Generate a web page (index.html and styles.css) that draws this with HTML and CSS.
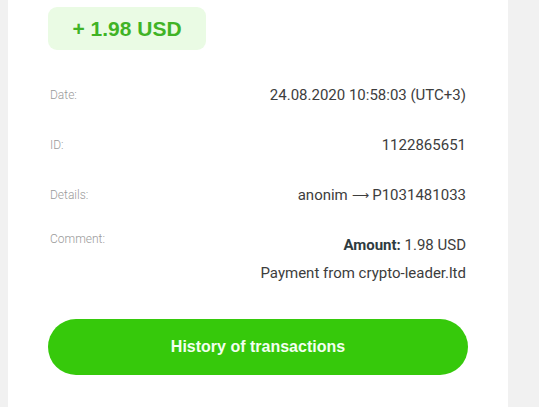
FILE: index.html
```html
<!DOCTYPE html>
<html>
<head>
<meta charset="utf-8">
<link rel="stylesheet" href="styles.css">
</head>
<body>
<div class="card">
  <div class="badge">+ 1.98 USD</div>
  <div class="rows">
    <div class="row">
      <span class="label">Date:</span>
      <span class="value">24.08.2020 10:58:03 (UTC+3)</span>
    </div>
    <div class="row">
      <span class="label">ID:</span>
      <span class="value">1122865651</span>
    </div>
    <div class="row">
      <span class="label">Details:</span>
      <span class="value">anonim <span class="arrow">⟶</span> P1031481033</span>
    </div>
    <div class="row row-comment">
      <span class="label">Comment:</span>
      <div class="comment">
        <div><b>Amount:</b> 1.98 USD</div>
        <div>Payment from crypto-leader.ltd</div>
      </div>
    </div>
  </div>
  <button class="history">History of transactions</button>
</div>
</body>
</html>
```
FILE: styles.css
```css
html, body {
  margin: 0;
  padding: 0;
}
body {
  background: #f1f1f1;
  height: 407px;
  overflow: hidden;
}
.card {
  margin-left: 8px;
  width: 500px;
  height: 407px;
  background: #fff;
  box-sizing: border-box;
  padding: 7px 42px 0 40px;
  font-family: Roboto, "Liberation Sans", sans-serif;
}
.badge {
  display: inline-block;
  box-sizing: border-box;
  width: 158px;
  height: 43px;
  line-height: 43px;
  text-align: center;
  background: #eafbe4;
  border-radius: 9px;
  color: #40b326;
  font-family: "Liberation Sans", Arial, sans-serif;
  font-weight: bold;
  font-size: 21px;
}
.rows {
  margin-top: 35px;
  display: flex;
  flex-direction: column;
  gap: 30px;
}
.row {
  display: flex;
  justify-content: space-between;
  align-items: center;
  height: 20px;
  line-height: 20px;
}
.label {
  padding-left: 2px;
  font-size: 12px;
  font-weight: 300;
  color: #9a9a9a;
}
.value {
  font-size: 15px;
  color: #3d3d3d;
}
.arrow {
  font-family: "DejaVu Sans", sans-serif;
  font-size: 12px;
  font-weight: 200;
  line-height: 0;
  vertical-align: 1px;
}
.row-comment {
  align-items: flex-start;
  height: auto;
  margin-top: -4px;
}
.row-comment .label {
  line-height: 16px;
}
.comment {
  text-align: right;
  font-size: 15px;
  line-height: 28px;
  color: #3d3d3d;
}
.comment b {
  color: #2e3b40;
  font-weight: bold;
}
.history {
  display: block;
  margin-top: 32px;
  width: 420px;
  height: 56px;
  border: none;
  border-radius: 28px;
  background: #36c90b;
  color: #f2fff0;
  font-family: "Liberation Sans", Arial, sans-serif;
  font-weight: bold;
  font-size: 16px;
  padding: 0;
}
```
